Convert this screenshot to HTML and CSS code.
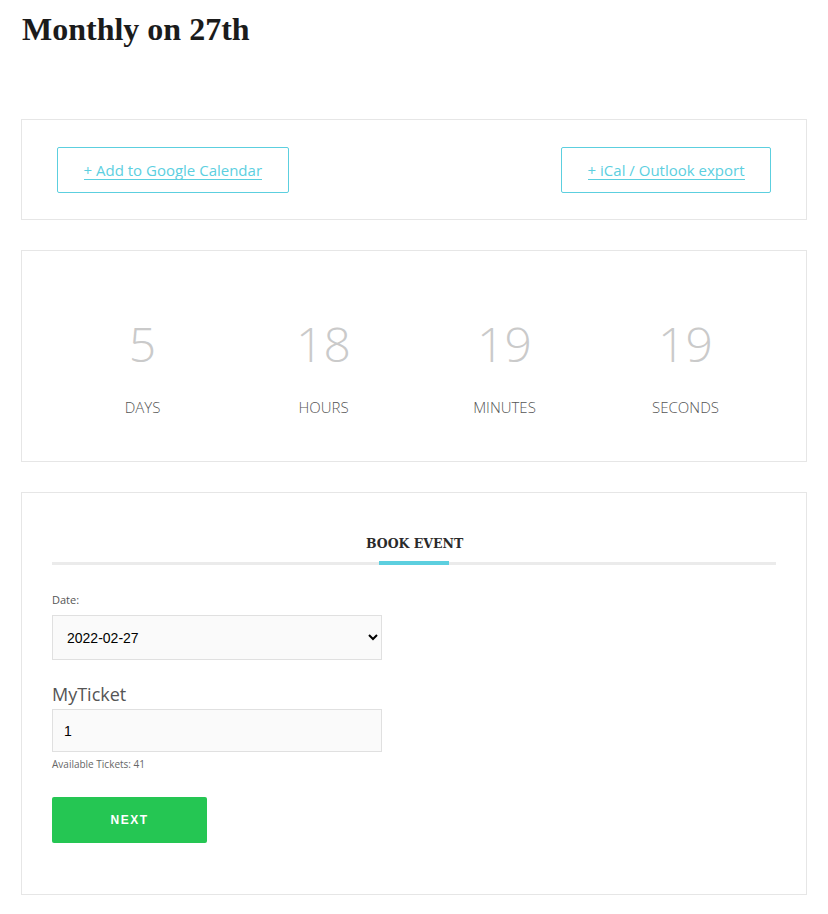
FILE: index.html
```html
<!DOCTYPE html>
<html lang="en">
<head>
    <meta charset="UTF-8">
    <meta name="viewport" content="width=device-width, initial-scale=1.0">
    <title>Monthly on 27th</title>
    <link rel="stylesheet" href="styles.css">
</head>
<body>
    <div class="page">
        <h1 class="event-title">Monthly on 27th</h1>

        <div class="box export-box">
            <a class="export-btn" href="#"><span>+ Add to Google Calendar</span></a>
            <a class="export-btn" href="#"><span>+ iCal / Outlook export</span></a>
        </div>

        <div class="box countdown">
            <div class="count-item">
                <div class="count-num">5</div>
                <div class="count-label">DAYS</div>
            </div>
            <div class="count-item">
                <div class="count-num">18</div>
                <div class="count-label">HOURS</div>
            </div>
            <div class="count-item">
                <div class="count-num">19</div>
                <div class="count-label">MINUTES</div>
            </div>
            <div class="count-item">
                <div class="count-num">19</div>
                <div class="count-label">SECONDS</div>
            </div>
        </div>

        <div class="box booking">
            <div class="book-tab">
                <h4>BOOK EVENT</h4>
            </div>

            <label class="field-label" for="dateSelect">Date:</label>
            <select id="dateSelect" class="field">
                <option>2022-02-27</option>
            </select>

            <div class="ticket-name">MyTicket</div>
            <input type="text" class="field field-input" value="1">
            <div class="ticket-note">Available Tickets: 41</div>

            <button class="next-btn">NEXT</button>
        </div>
    </div>
</body>
</html>
```

FILE: styles.css
```css
body, html {
    margin: 0;
    padding: 0;
    background-color: #fff;
    font-family: "Open Sans", Arial, sans-serif;
}

.page {
    padding: 0 21px 20px 21px;
}

.event-title {
    margin: 0;
    padding: 11px 0 0 1px;
    height: 119px;
    box-sizing: border-box;
    font-family: "Liberation Serif", "Times New Roman", serif;
    font-size: 32px;
    font-weight: bold;
    letter-spacing: 0;
    color: #1b1b1b;
}

.box {
    border: 1px solid #e6e6e6;
    margin-bottom: 30px;
}

/* calendar export buttons */
.export-box {
    display: flex;
    justify-content: space-between;
    padding: 27px 35px 26px 35px;
}

.export-btn {
    display: flex;
    align-items: center;
    justify-content: center;
    height: 44px;
    padding: 0 25.5px;
    border: 1px solid #5ccfdf;
    border-radius: 2px;
    color: #5ccfdf;
    font-size: 15px;
    text-decoration: none;
}

.export-btn span {
    border-bottom: 1px solid #5ccfdf;
    line-height: 18px;
}

/* countdown */
.countdown {
    display: grid;
    grid-template-columns: repeat(4, 1fr);
    padding: 62px 30px 44px 30px;
}

.count-item {
    text-align: center;
}

.count-num {
    font-size: 48px;
    font-weight: 300;
    color: #cacaca;
    line-height: 62px;
}

.count-label {
    margin-top: 22px;
    font-size: 15px;
    font-weight: 300;
    color: #555;
    line-height: 20px;
}

/* booking form */
.booking {
    padding: 38px 30px 51px 30px;
}

.book-tab {
    border-bottom: 3px solid #ebebeb;
    text-align: center;
    margin-bottom: 27px;
}

.book-tab h4 {
    display: inline-block;
    margin: 0 0 -3px 0;
    padding: 0 0 10px 0;
    width: 70px;
    white-space: nowrap;
    text-indent: -13px;
    font-family: "DejaVu Serif", Georgia, serif;
    font-size: 12.5px;
    font-weight: bold;
    color: #2a2a2a;
    border-bottom: 4px solid #5ccfdf;
}

.field-label {
    display: block;
    font-size: 11px;
    color: #555;
    margin-bottom: 8px;
}

.field {
    display: block;
    width: 330px;
    height: 45px;
    box-sizing: border-box;
    border: 1px solid #e0e0e0;
    background-color: #fafafa;
    font-family: Arial, sans-serif;
    font-size: 14px;
    color: #000;
    padding: 0 10px;
}

.field-input {
    height: 43px;
    padding: 0 11px;
}

.ticket-name {
    margin-top: 23px;
    margin-bottom: 4px;
    font-size: 18px;
    color: #555;
    line-height: 22px;
}

.ticket-note {
    margin-top: 5px;
    font-size: 10px;
    color: #666;
}

.next-btn {
    display: block;
    margin-top: 26px;
    width: 155px;
    height: 46px;
    border: none;
    border-radius: 2px;
    background-color: #25c653;
    color: #fff;
    font-family: Arial, sans-serif;
    font-size: 12px;
    font-weight: bold;
    letter-spacing: 1.5px;
    cursor: pointer;
}
```
